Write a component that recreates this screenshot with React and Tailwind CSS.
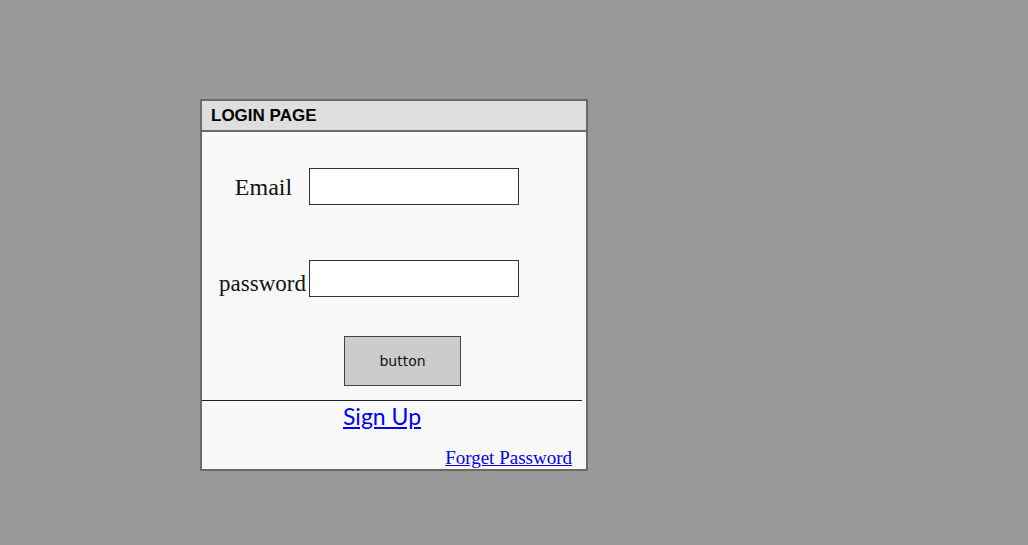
import React from 'react';

const serif = { fontFamily: '"Liberation Serif", "Times New Roman", serif' };

const App = () => {
  return (
    <div className="min-h-screen w-full bg-[#999999] pt-[99px] pl-[200px]">
      <div className="flex h-[372px] w-[388px] flex-col border-2 border-[#6a6a6a] bg-[#f9f9f9]">
        <div className="flex h-[31px] items-center border-b-2 border-[#6a6a6a] bg-[#dedede] pl-[9px]">
          <span className="font-['Liberation_Sans',Arial,sans-serif] text-[17px] font-bold text-black">LOGIN PAGE</span>
        </div>

        <div className="mt-[36px] flex h-[37px] items-center">
          <label className="w-[107px] pl-[16px] text-center text-[24px] text-[#111]" style={serif}>Email</label>
          <input type="text" className="h-[37px] w-[210px] border border-[#333] bg-white outline-none" />
        </div>

        <div className="mt-[55px] flex h-[37px] items-center">
          <label className="w-[107px] pl-[14px] pt-[12px] text-center text-[23px] text-[#111]" style={serif}>password</label>
          <input type="password" className="h-[37px] w-[210px] border border-[#333] bg-white outline-none" />
        </div>

        <div className="mt-[39px] pl-[142px]">
          <button className="h-[50px] w-[117px] border border-[#444] bg-[#cccccc] font-['DejaVu_Sans',sans-serif] text-[14px] text-[#111]">
            button
          </button>
        </div>

        <div className="mt-[14px] mr-[4px] h-px bg-[#222]" />

        <div className="flex pl-[141px] pt-[1px]">
          <a href="#" className="font-['Lato',sans-serif] text-[23px] leading-[28px] text-[#0000ee] underline">Sign Up</a>
        </div>

        <div className="mt-auto flex justify-end pr-[14px]">
          <a href="#" className="text-[19px] leading-[22px] text-[#0000ee] underline" style={serif}>Forget Password</a>
        </div>
      </div>
    </div>
  );
};

export default App;
